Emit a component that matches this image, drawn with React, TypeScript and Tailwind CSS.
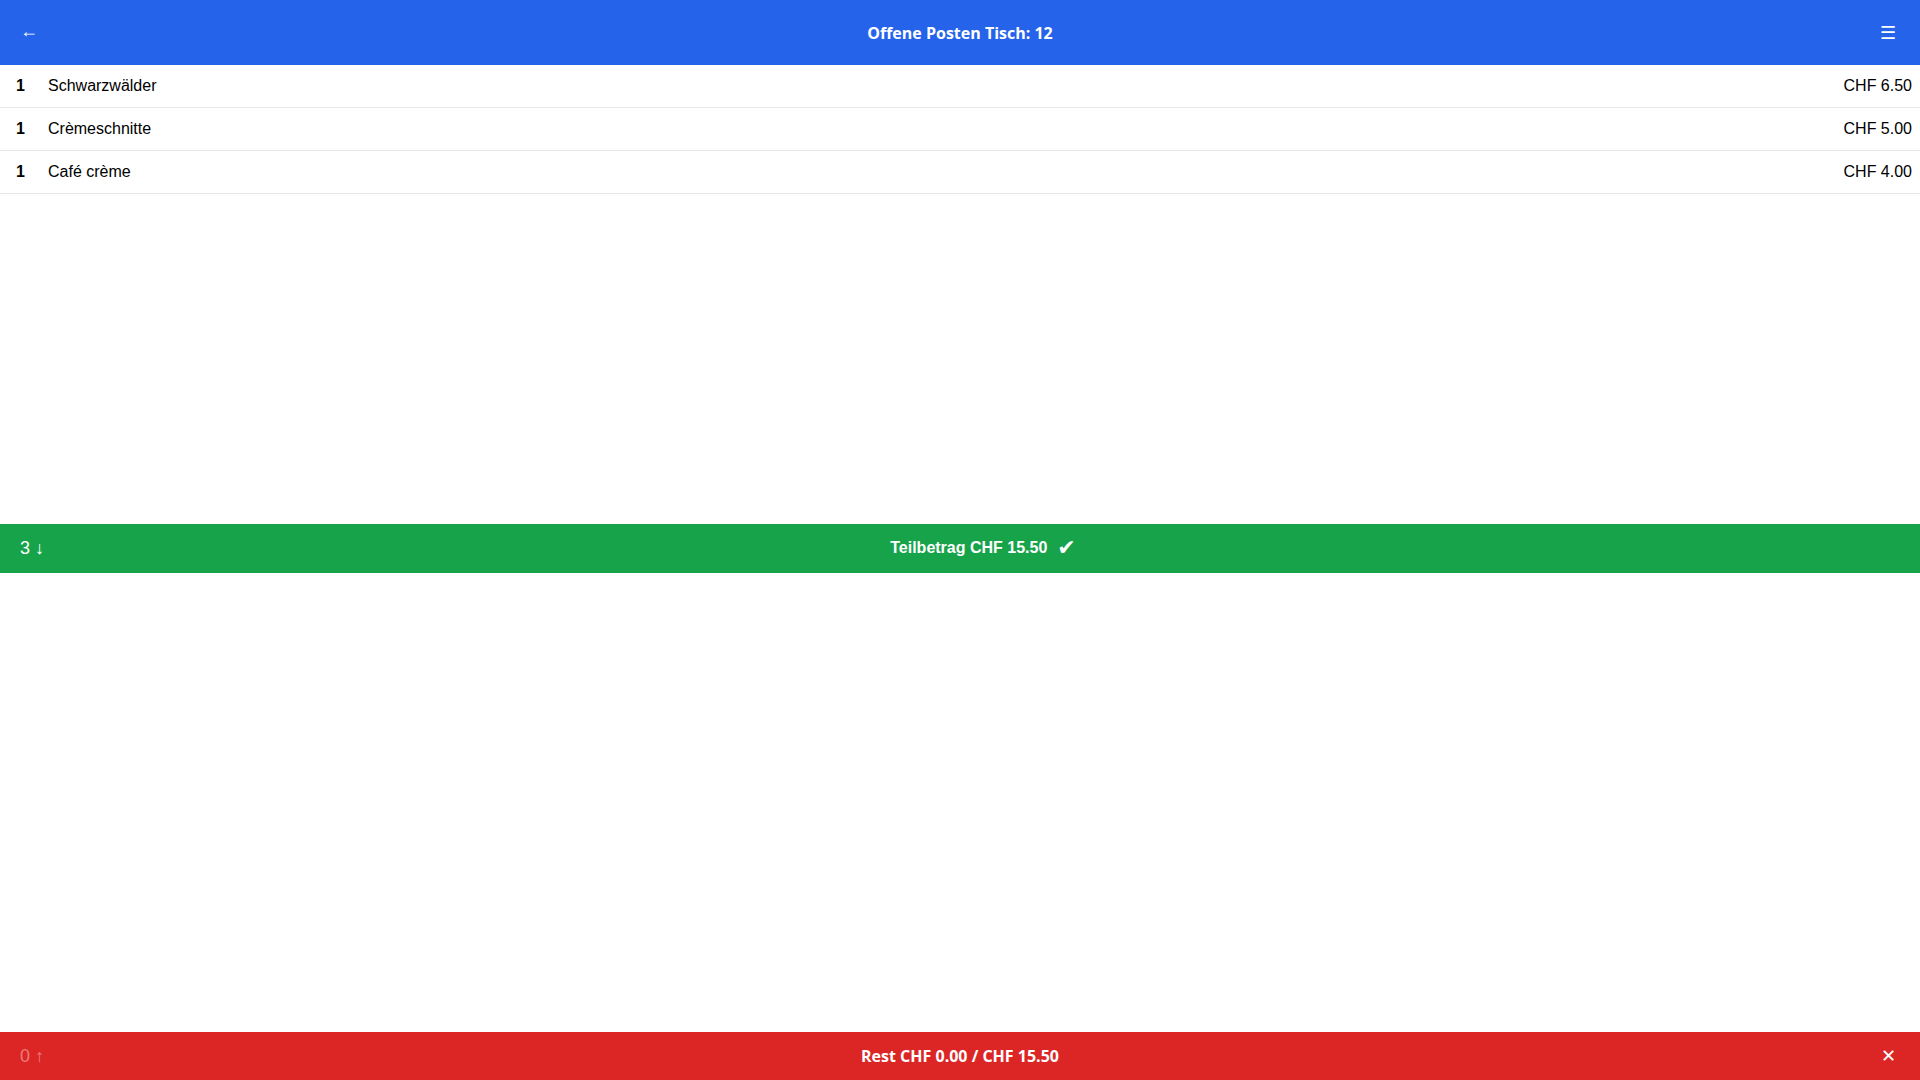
import { useState } from 'react';

type Item = { qty: number; name: string; price: number };

const items: Item[] = [
  { qty: 1, name: 'Schwarzwälder', price: 6.5 },
  { qty: 1, name: 'Crèmeschnitte', price: 5.0 },
  { qty: 1, name: 'Café crème', price: 4.0 },
];

const fmt = (n: number) => `CHF ${n.toFixed(2)}`;

export default function App() {
  const [selected] = useState<Item[]>(items);
  const total = selected.reduce((s, i) => s + i.price, 0);

  return (
    <div className="flex h-screen flex-col bg-white font-['Liberation_Sans',Arial,sans-serif] text-black">
      {/* Header */}
      <header className="flex h-[65px] shrink-0 items-center justify-between bg-[#2563eb] px-6 text-white">
        <button className="-ml-1 mb-1 w-9 text-left text-lg leading-none">←</button>
        <h1 className="font-['Open_Sans',sans-serif] text-base font-bold">Offene Posten Tisch: 12</h1>
        <button className="w-8 text-right font-['DejaVu_Sans',sans-serif] text-lg font-bold leading-none">☰</button>
      </header>

      {/* Oben: ausgewählte Posten */}
      <section className="flex flex-1 flex-col">
        <div className="flex-1">
          {selected.map((item) => (
            <div
              key={item.name}
              className="flex h-[43px] items-center border-b border-gray-200 pl-4 pr-2 text-base"
            >
              <span className="w-8 font-bold">{item.qty}</span>
              <span className="flex-1">{item.name}</span>
              <span>{fmt(item.price)}</span>
            </div>
          ))}
        </div>
        <div className="flex h-[49px] shrink-0 items-center bg-[#16a34a] text-white">
          <span className="w-[100px] pl-5 text-lg">3 ↓</span>
          <span className="flex flex-1 items-center justify-center gap-2.5">
            <span className="text-base font-bold">Teilbetrag {fmt(total)}</span>
            <span className="font-['DejaVu_Sans',sans-serif] text-[22px] leading-none">✔</span>
          </span>
          <span className="w-[54px]" />
        </div>
      </section>

      {/* Unten: Rest */}
      <section className="flex flex-1 flex-col">
        <div className="flex-1" />
        <div className="flex h-[48px] shrink-0 items-center justify-between bg-[#dc2626] px-5 text-white">
          <span className="w-24 text-lg text-white/40">0 ↑</span>
          <span className="font-['Open_Sans',sans-serif] text-base font-bold">
            Rest {fmt(0)} / {fmt(total)}
          </span>
          <span className="w-24 pr-1 text-right font-['DejaVu_Sans',sans-serif] text-lg leading-none">✕</span>
        </div>
      </section>
    </div>
  );
}
